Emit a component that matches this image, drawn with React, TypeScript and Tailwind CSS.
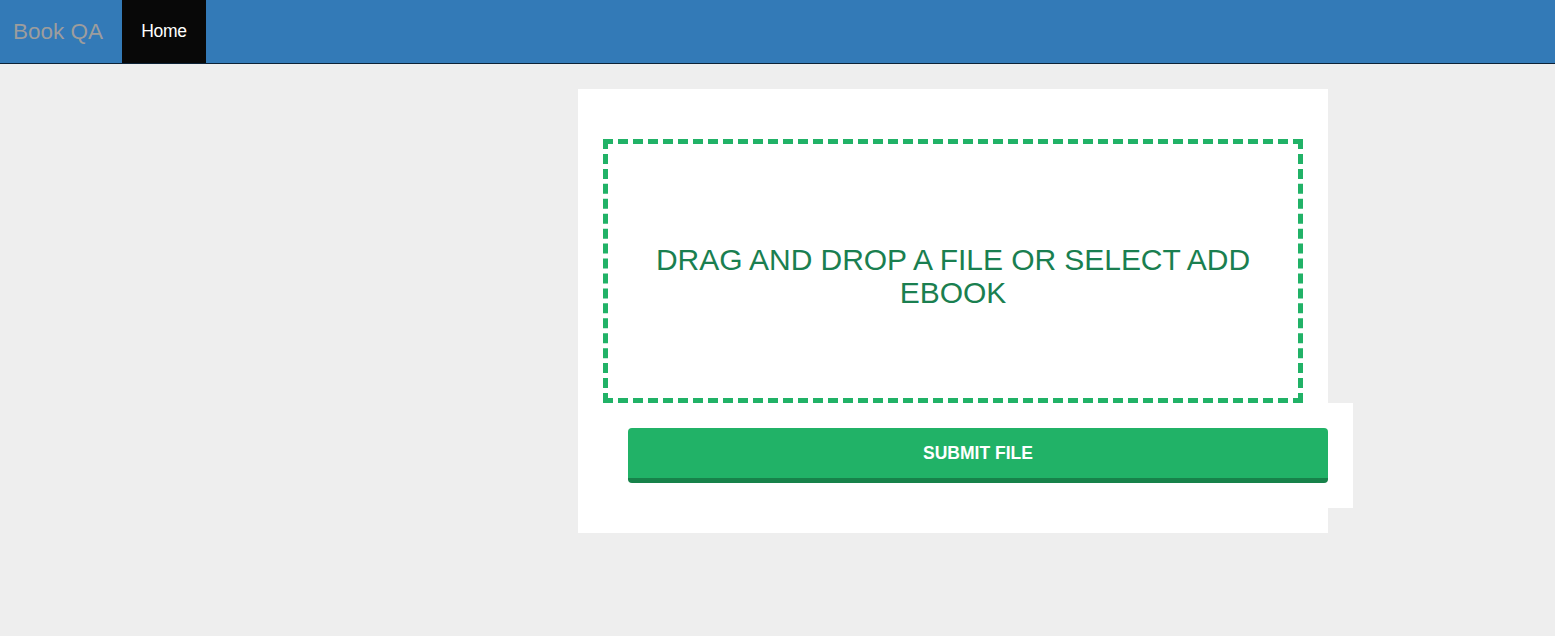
export default function App() {
  return (
    <div className="min-h-[636px] bg-[#eeeeee]" style={{ fontFamily: '"Liberation Sans", Arial, sans-serif' }}>
      <nav className="flex h-[64px] items-stretch border-b border-[#0d2236] bg-[#337ab7]">
        <div className="flex w-[122px] items-center pl-[13px] text-[22.5px] text-[#9d9d9d]">Book QA</div>
        <div className="flex w-[84px] items-center justify-center bg-[#080808] text-[17.5px] tracking-[-0.3px] text-white">Home</div>
      </nav>

      <div className="ml-[578px] mt-[25px] w-[750px] bg-white p-[25px]">
        <div className="mt-[25px] flex h-[264px] items-center justify-center border-[5px] border-dashed border-[#21b267] px-[30px]">
          <p className="pt-[10px] text-center text-[30px] leading-[33px] tracking-[-0.05px] text-[#1a7f50]">
            DRAG AND DROP A FILE OR SELECT ADD EBOOK
          </p>
        </div>
        <div className="w-[750px] bg-white p-[25px]">
          <button className="flex h-[55px] w-[700px] items-center justify-center rounded-[4px] border-b-[5px] border-[#17824a] bg-[#21b267] text-[17.5px] font-bold text-white">
            SUBMIT FILE
          </button>
        </div>
      </div>
    </div>
  )
}
